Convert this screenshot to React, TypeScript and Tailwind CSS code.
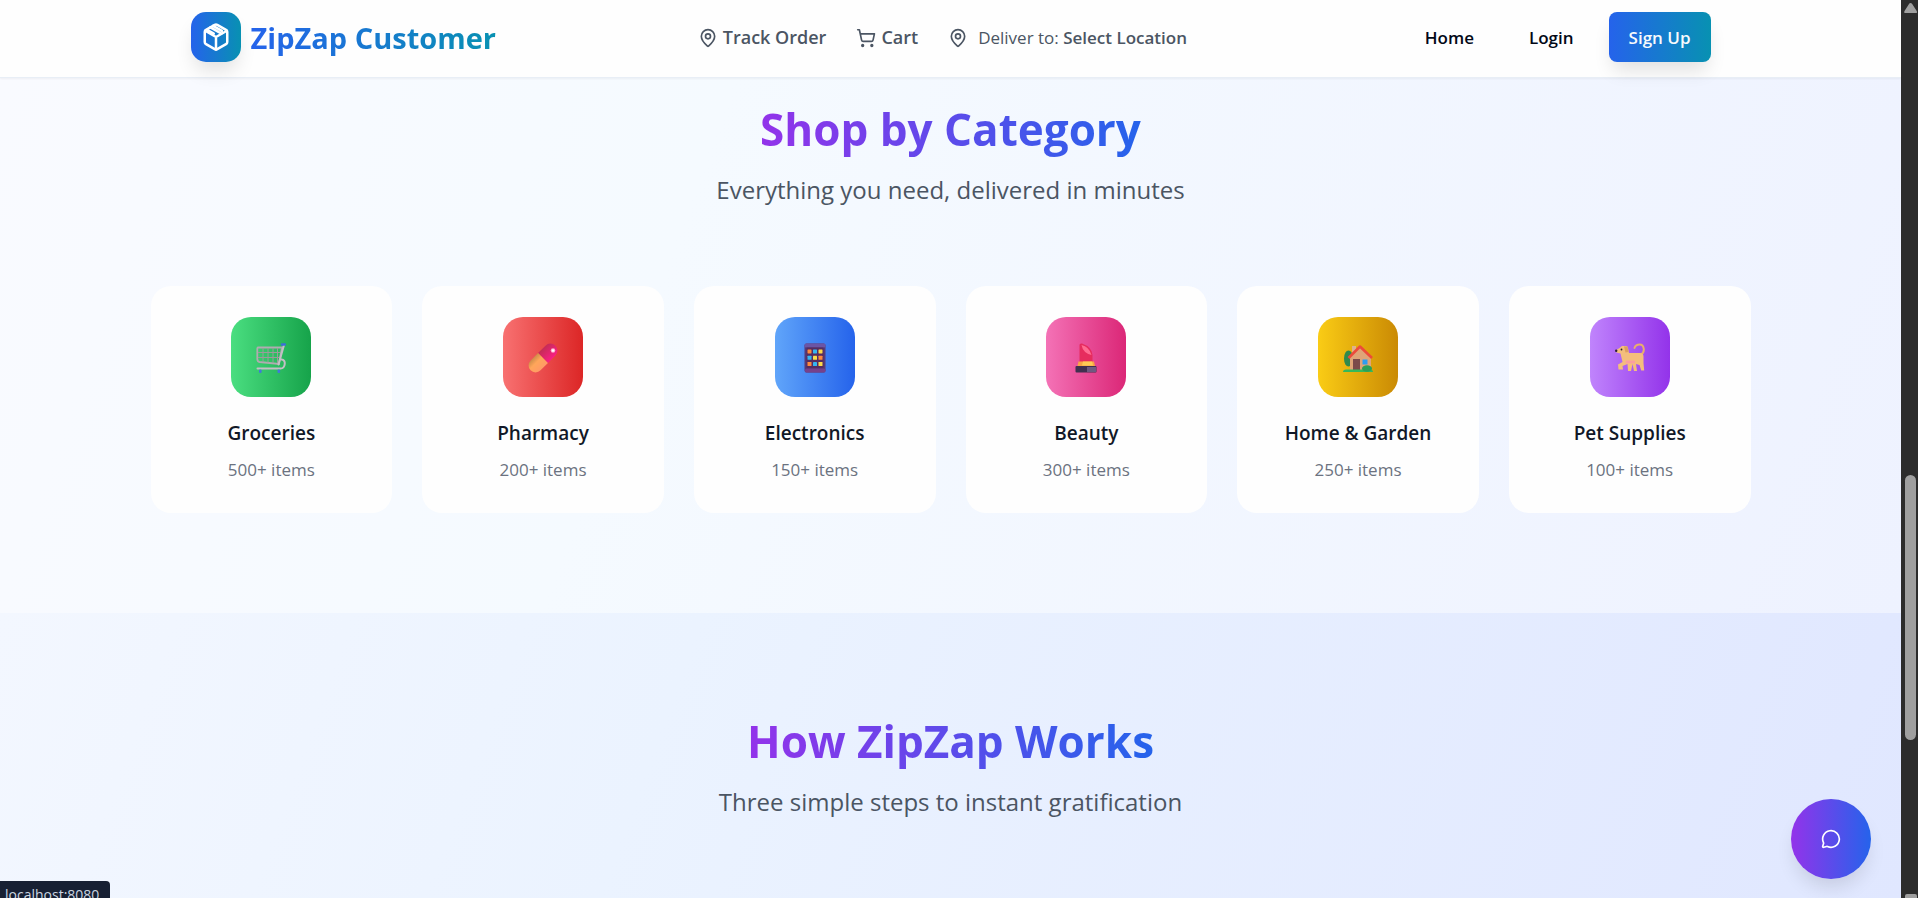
import type { ReactNode } from "react";
import { MapPin, MessageCircle, ShoppingCart } from "lucide-react";

function BoxMark() {
  return (
    <svg viewBox="0 0 24 24" className="size-[30px]" fill="none" stroke="white" strokeWidth="2" strokeLinecap="round" strokeLinejoin="round" aria-hidden="true">
      <path d="M21 8a2 2 0 0 0-1-1.73l-7-4a2 2 0 0 0-2 0l-7 4A2 2 0 0 0 3 8v8a2 2 0 0 0 1 1.73l7 4a2 2 0 0 0 2 0l7-4A2 2 0 0 0 21 16Z" />
      <path d="m3.3 7 8.7 5 8.7-5M12 22V12M7.5 4.27l9 5.15M5.6 6.6l4.6 2.7M9.7 3.1l7 4" />
    </svg>
  );
}

function CartArt() {
  return (
    <svg viewBox="0 0 30 32" className="h-8 w-[30px]" fill="none" aria-hidden="true">
      <path d="M2 5.5h24l-3 16.5-19.5-2Q1.4 19.7 1.3 17V7Q1.3 5.5 2 5.5Z" stroke="#b0acb0" strokeWidth="1.800" />
      <path d="M7 6v14M12 6v14.500M17 6v15M21.500 6v15M2 10.500h22M2 15.500h22" stroke="#9b9b9b" strokeWidth="1" />
      <path d="M28 3l-5.500 19.500M25.500 17.500c5 0 4 9-1 9H1.500" stroke="#c4bfc5" strokeWidth="2" strokeLinecap="round" />
      <path d="M26 2.500h3" stroke="#3b6fd8" strokeWidth="2.400" strokeLinecap="round" />
      <rect x="3" y="27.500" width="2.600" height="3.500" rx="1" fill="#4277dc" />
      <rect x="21.500" y="27.500" width="2.600" height="3.500" rx="1" fill="#4277dc" />
    </svg>
  );
}

function PillArt() {
  return (
    <svg viewBox="0 0 30 30" className="size-[30px]" aria-hidden="true">
      <defs>
        <linearGradient id="pillTop" x1="0" x2="1">
          <stop offset="0" stopColor="#c42d55" />
          <stop offset="1" stopColor="#fa1f84" />
        </linearGradient>
        <linearGradient id="pillBottom" x1="1" x2="0">
          <stop offset="0" stopColor="#ff9a66" />
          <stop offset="0.6" stopColor="#ffa65a" />
          <stop offset="1" stopColor="#cf8c4a" />
        </linearGradient>
      </defs>
      <g transform="rotate(45 15 15)">
        <path d="M8 15V4.500a7 7 0 0 1 14 0V15Z" fill="url(#pillTop)" />
        <path d="M8 15v10.500a7 7 0 0 0 14 0V15Z" fill="url(#pillBottom)" />
      </g>
      <circle cx="25" cy="7.500" r="2.300" fill="#ffa9cb" />
      <circle cx="25" cy="7.500" r="1.200" fill="#fff" />
    </svg>
  );
}

const phoneTiles = ["#ff8a3d", "#35b5f2", "#fbd94a", "#35b5f2", "#fbe04a", "#ff8a3d", "#ff8a3d", "#35b5f2", "#fbd94a"];

function PhoneArt() {
  return (
    <svg viewBox="0 0 30 30" className="size-[30px]" aria-hidden="true">
      <rect x="4.500" y="0.500" width="21" height="29" rx="2" fill="#553a78" />
      <rect x="4.500" y="0.500" width="21" height="4" rx="1.500" fill="#6b55a5" />
      <rect x="6.500" y="4.500" width="17" height="21" fill="#562c60" />
      <rect x="5" y="25.500" width="20.500" height="4" rx="1.500" fill="#76418c" />
      {phoneTiles.map((color, i) => (
        <rect key={i} x={7.5 + (i % 3) * 5.5} y={6.5 + Math.floor(i / 3) * 6.3} width="4" height="4" rx="0.400" fill={color} />
      ))}
    </svg>
  );
}

function LipstickArt() {
  return (
    <svg viewBox="0 0 30 30" className="size-[30px]" aria-hidden="true">
      <path d="M8.500 19V2Q8.500 0 11 0.500Q21 4 21.500 12v7Z" fill="#e62c5e" />
      <path d="M10.500 2Q18 3.500 20.500 12Q12 10 10.500 2Z" fill="#ff6b92" />
      <path d="M7.500 18.500h15.500l1 4.500H6.500Z" fill="#f9a544" />
      <path d="M12 18.500h9l1 4H11Z" fill="#ffcb55" />
      <rect x="4.500" y="23" width="21" height="6.500" rx="1" fill="#40304f" />
      <rect x="16" y="24" width="9" height="5" fill="#6e5a80" />
    </svg>
  );
}

function HouseArt() {
  return (
    <svg viewBox="0 0 30 30" className="size-[30px]" aria-hidden="true">
      <rect x="9" y="3" width="4" height="9" fill="#dfb18d" />
      <ellipse cx="5.500" cy="15.500" rx="4.500" ry="8" fill="#2f8a4d" />
      <path d="M7 14 17 4l11 10v14H7Z" fill="#dfa477" />
      <path d="M5.500 15 17 3.500l12 11.500" fill="none" stroke="#ec4b3a" strokeWidth="2.600" strokeLinejoin="round" />
      <rect x="10" y="16" width="7" height="11" fill="#7b4a4a" />
      <rect x="19.500" y="16.500" width="5" height="5" fill="#2d9cf0" />
      <path d="M0 29q0-2.500 3-2.500h24q3 0 3 2.500Z" fill="#35b95b" />
      <ellipse cx="24" cy="25.500" rx="5" ry="3.300" fill="#2b9f57" />
    </svg>
  );
}

function DogArt() {
  return (
    <svg viewBox="0 0 30 30" className="size-[30px]" aria-hidden="true">
      <path d="M25.500 12c5-2.500 4-10.500-1-10.500-3 0-4.500 2-5 3.500" fill="none" stroke="#e9ae6c" strokeWidth="2" strokeLinecap="round" />
      <path d="M5.500 10.500 1.500 9.500 0.500 7.500 4.500 5 7 3h4q1.500 0 2 2l1 5H25q3.500 0 3.500 3.500V20l.7 7.500h-3l-1.700-5.500-3.500-1 1 7h-3l-1.500-7-1.500 7h-3l-.5-7-5 2 .5 3.500H3.500L3 21.500 7.500 19Z" fill="#f4be7c" />
      <path d="M9 3.500h3.500l1 5.500-3 .5Z" fill="#dda05e" />
      <path d="M11 17.500h9v3h-9.500Z" fill="#fb9f9e" />
      <circle cx="1.200" cy="7.700" r="1.200" fill="#2c1d33" />
      <circle cx="6.500" cy="6.500" r="0.900" fill="#2c1d33" />
    </svg>
  );
}

type Category = { name: string; items: string; tile: string; art: ReactNode };

const categories: Category[] = [
  { name: "Groceries", items: "500+ items", tile: "bg-linear-to-r/srgb from-[#4ade80] to-[#16a34a]", art: <CartArt /> },
  { name: "Pharmacy", items: "200+ items", tile: "bg-linear-to-r/srgb from-[#f87171] to-[#dc2626]", art: <PillArt /> },
  { name: "Electronics", items: "150+ items", tile: "bg-linear-to-r/srgb from-[#60a5fa] to-[#2563eb]", art: <PhoneArt /> },
  { name: "Beauty", items: "300+ items", tile: "bg-linear-to-r/srgb from-[#f472b6] to-[#db2777]", art: <LipstickArt /> },
  { name: "Home & Garden", items: "250+ items", tile: "bg-linear-to-r/srgb from-[#facc15] to-[#ca8a04]", art: <HouseArt /> },
  { name: "Pet Supplies", items: "100+ items", tile: "bg-linear-to-r/srgb from-[#c084fc] to-[#9333ea]", art: <DogArt /> },
];

function SectionHeading({ title, subtitle }: { title: string; subtitle: string }) {
  return (
    <div className="flex flex-col items-center gap-[15px] text-center">
      <h2 className="bg-linear-to-r/srgb from-[#9333ea] to-[#2563eb] bg-clip-text text-[44px] leading-14 font-bold text-transparent">{title}</h2>
      <p className="text-[24px] leading-[35px] text-[#4b5563]">{subtitle}</p>
    </div>
  );
}

function Header() {
  return (
    <header className="z-10 border-b border-[#e8eef6] bg-[#fefefe] shadow-xs">
      <div className="mx-auto flex h-[77px] max-w-[1520px] items-center justify-between pb-1">
        <a href="#home" className="flex items-center gap-2.5">
          <span className="flex size-[50px] items-center justify-center rounded-[15px] bg-linear-to-r/srgb from-[#2563eb] to-[#0891b2] shadow-[0_12px_19px_-4px_rgb(0_0_0/0.12)]">
            <BoxMark />
          </span>
          <span className="bg-linear-to-r/srgb from-[#2563eb] to-[#0891b2] bg-clip-text pt-0.5 text-[29px] leading-10 font-bold text-transparent">ZipZap Customer</span>
        </a>
        <nav className="mr-4 flex items-center gap-[30px] pt-0.5 text-[#4b5563]">
          <a href="#track" className="flex items-center gap-[5px] text-[18px] font-semibold">
            <MapPin className="size-5" />
            Track Order
          </a>
          <a href="#cart" className="flex items-center gap-[5px] text-[18px] font-semibold">
            <ShoppingCart className="size-5" />
            Cart
          </a>
          <button type="button" className="flex items-center gap-2.5 text-[17px]">
            <MapPin className="size-5" />
            <span>
              Deliver to: <strong className="font-semibold">Select Location</strong>
            </span>
          </button>
        </nav>
        <div className="flex items-center gap-[15px] text-[17px] font-semibold text-[#020817]">
          <a href="#home" className="px-5 pt-0.5">Home</a>
          <a href="#login" className="px-5 pt-0.5">Login</a>
          <button type="button" className="h-[50px] rounded-lg bg-linear-to-r/srgb from-[#2563eb] to-[#0891b2] px-5 pt-0.5 text-[#f8fafc] shadow-[0_12px_19px_-4px_rgb(0_0_0/0.12)]">Sign Up</button>
        </div>
      </div>
    </header>
  );
}

function Scrollbar() {
  return (
    <div className="flex w-[17px] shrink-0 flex-col items-center bg-[#2c2c2c]" aria-hidden="true">
      <svg viewBox="0 0 17 16" className="h-4 w-full" fill="#9f9f9f">
        <path d="M9.500 3q1 0 1.700 1l4.500 7q1 2-1 2H4.500q-2 0-1-2l4.500-7q.500-1 1.500-1Z" />
      </svg>
      <div className="basis-[459px]" />
      <div className="ml-0.5 h-[265px] w-[11px] rounded-full bg-[#9f9f9f]" />
      <div className="grow" />
      <div className="ml-0.5 h-1 w-3 rounded-t-xs bg-[#9f9f9f]" />
    </div>
  );
}

export default function App() {
  return (
    <div className="flex h-screen overflow-hidden font-['Open_Sans','Noto_Sans',sans-serif]">
      <div className="relative flex min-w-0 grow flex-col">
        <Header />
        <main className="flex grow flex-col">
          <section className="bg-linear-110/srgb from-[#f9faff] via-[#f5faff] via-35% to-[#eef2ff] px-10 pt-[23px] pb-[100px]">
            <SectionHeading title="Shop by Category" subtitle="Everything you need, delivered in minutes" />
            <ul className="mx-auto mt-[79px] grid max-w-[1600px] grid-cols-6 gap-[30px]">
              {categories.map((category) => (
                <li key={category.name} className="flex flex-col items-center rounded-[20px] bg-[#fefefe] p-[31px] text-center">
                  <span className={`flex size-20 items-center justify-center rounded-[20px] pt-0.5 ${category.tile}`}>{category.art}</span>
                  <h3 className="mt-[19px] text-[19px] leading-[35px] font-semibold whitespace-nowrap text-[#111827]">{category.name}</h3>
                  <p className="mt-1.5 text-[17px] leading-[25px] text-[#6b7280]">{category.items}</p>
                </li>
              ))}
            </ul>
          </section>
          <section className="grow bg-linear-110/srgb from-[#f3f7ff] via-[#ebf3ff] via-35% to-[#e0e7ff] px-10 pt-[100px]">
            <SectionHeading title="How ZipZap Works" subtitle="Three simple steps to instant gratification" />
          </section>
        </main>
        <button type="button" aria-label="Open chat" className="absolute right-[30px] bottom-[19px] flex size-20 items-center justify-center rounded-full bg-linear-to-r/srgb from-[#9333ea] to-[#2563eb] text-white shadow-[0_12px_19px_-4px_rgb(0_0_0/0.12)]">
          <MessageCircle className="size-5" />
        </button>
        <div className="absolute bottom-0 left-0 h-[17px] w-[110px] overflow-hidden rounded-tr-sm bg-[#172033] pt-0.5 pl-[5px] text-[14px] leading-6 text-[#cbd5e1]">localhost:8080</div>
      </div>
      <Scrollbar />
    </div>
  );
}
